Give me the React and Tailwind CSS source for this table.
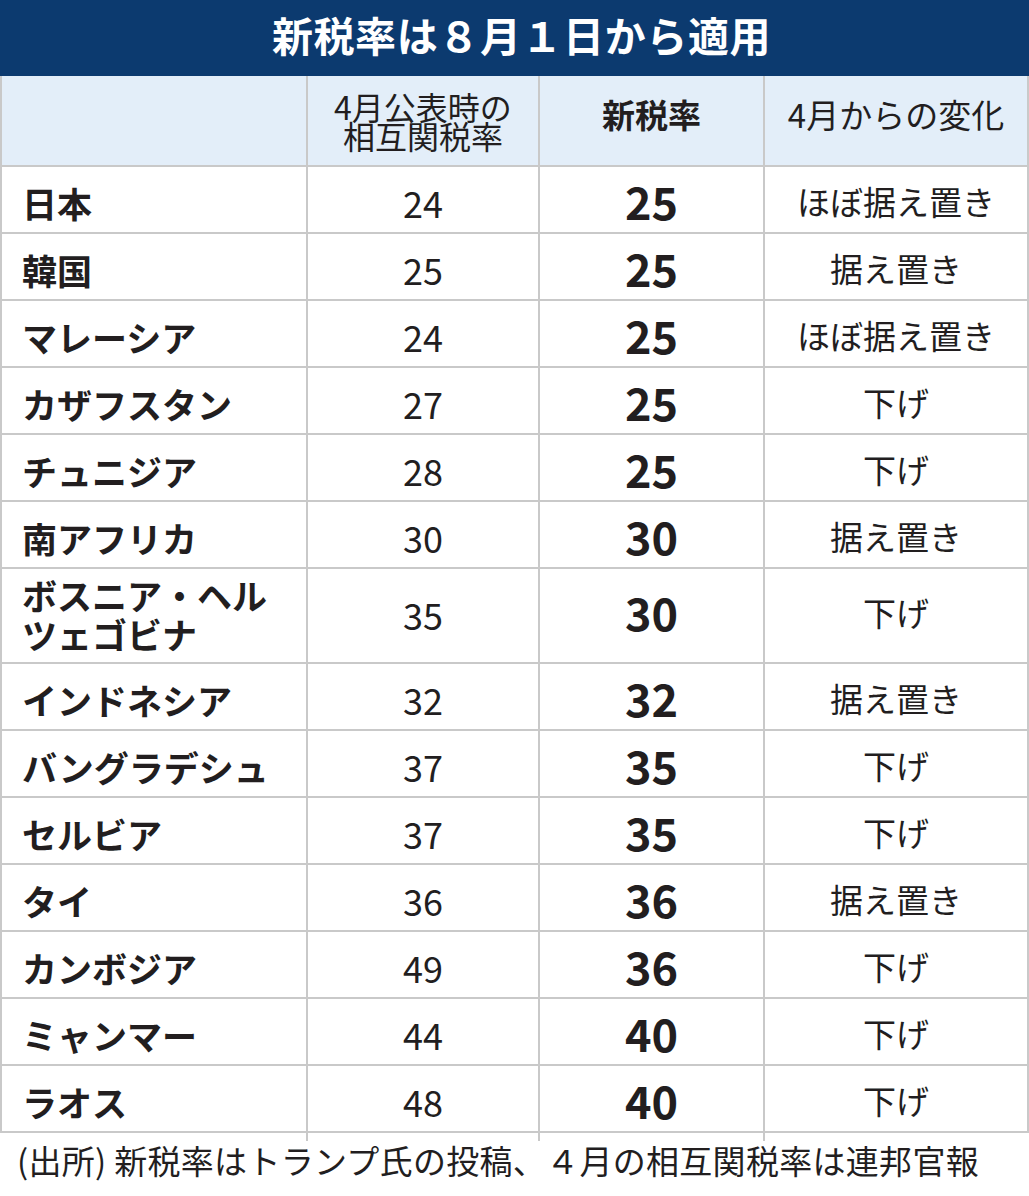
const rows = [
  { name: "日本", prev: "24", next: "25", change: "ほぼ据え置き" },
  { name: "韓国", prev: "25", next: "25", change: "据え置き" },
  { name: "マレーシア", prev: "24", next: "25", change: "ほぼ据え置き" },
  { name: "カザフスタン", prev: "27", next: "25", change: "下げ" },
  { name: "チュニジア", prev: "28", next: "25", change: "下げ" },
  { name: "南アフリカ", prev: "30", next: "30", change: "据え置き" },
  { name: ["ボスニア・ヘル", "ツェゴビナ"], prev: "35", next: "30", change: "下げ", tall: true },
  { name: "インドネシア", prev: "32", next: "32", change: "据え置き" },
  { name: "バングラデシュ", prev: "37", next: "35", change: "下げ" },
  { name: "セルビア", prev: "37", next: "35", change: "下げ" },
  { name: "タイ", prev: "36", next: "36", change: "据え置き" },
  { name: "カンボジア", prev: "49", next: "36", change: "下げ" },
  { name: "ミャンマー", prev: "44", next: "40", change: "下げ" },
  { name: "ラオス", prev: "48", next: "40", change: "下げ" },
]

const App = () => {
  return (
    <div className="w-[1029px] h-[1196px] bg-white text-[#221e1f] font-['Noto_Sans_CJK_JP','Noto_Sans',sans-serif]">
      {/* Title */}
      <div className="h-[76px] bg-[#0c3a6f] flex items-center justify-center pb-[8px] pl-[14px]">
        <h1 className="text-white text-[41px] font-bold leading-none tracking-[0.6px]">新税率は８月１日から適用</h1>
      </div>

      {/* Table */}
      <div className="border-x-2 border-[#c9c9c9]">
        {/* Header */}
        <div className="grid grid-cols-[306px_232px_225px_1fr] h-[91px] bg-[#e3eef9] border-b-2 border-[#c9c9c9]">
          <div className="border-r-2 border-[#c9c9c9]" />
          <div className="border-r-2 border-[#c9c9c9] flex flex-col items-center justify-center text-[32px] leading-[29px]">
            <span>4月公表時の</span>
            <span>相互関税率</span>
          </div>
          <div className="border-r-2 border-[#c9c9c9] flex items-center justify-center text-[33px] font-bold pb-[12px]">
            新税率
          </div>
          <div className="flex items-center justify-center text-[33px] pb-[12px]">4月からの変化</div>
        </div>

        {/* Rows */}
        {rows.map((row, i) => (
          <div
            key={i}
            className={`grid grid-cols-[306px_232px_225px_1fr] border-b-2 border-[#c9c9c9] ${row.tall ? "h-[95px]" : "h-[67px]"}`}
          >
            <div className="border-r-2 border-[#c9c9c9] flex flex-col justify-center pl-[20px] text-[35px] font-bold leading-[39px] pb-[4px]">
              {Array.isArray(row.name) ? row.name.map((n) => <span key={n}>{n}</span>) : row.name}
            </div>
            <div className="border-r-2 border-[#c9c9c9] flex items-center justify-center text-[36px] pb-[4px]">
              {row.prev}
            </div>
            <div className="border-r-2 border-[#c9c9c9] flex items-center justify-center text-[45px] font-bold pb-[7px]">
              {row.next}
            </div>
            <div className="flex items-center justify-center text-[33px] pb-[5px]">{row.change}</div>
          </div>
        ))}
      </div>

      {/* Source */}
      <div className="h-[63px] flex items-center pl-[17px] text-[33px] tracking-[0.3px] pb-[7px]">
        (出所) 新税率はトランプ氏の投稿、４月の相互関税率は連邦官報
      </div>
    </div>
  )
}

export default App
